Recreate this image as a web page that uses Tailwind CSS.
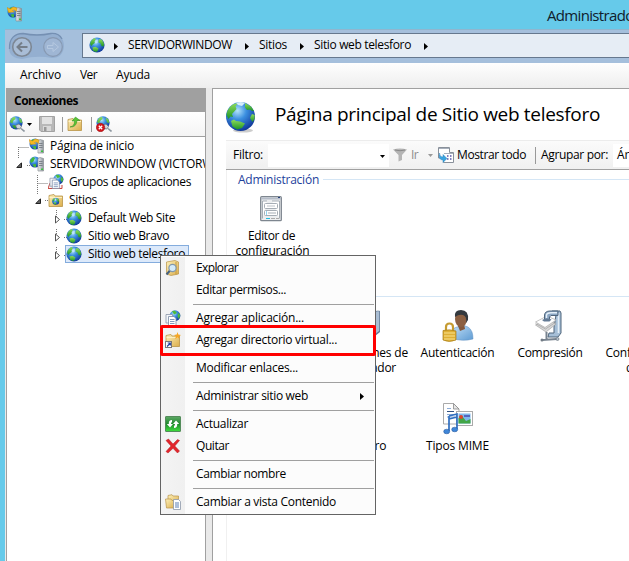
<!DOCTYPE html>
<html lang="es">
<head>
<meta charset="utf-8">
<title>Administrador de Internet Information Services</title>
<script src="https://cdn.jsdelivr.net/npm/@tailwindcss/browser@4"></script>
</head>
<body class="w-[629px] h-[561px] overflow-hidden bg-[#66caea] font-['Open_Sans','Noto_Sans',sans-serif] text-[12px] leading-[18px] text-black whitespace-nowrap relative">

<svg width="0" height="0" class="absolute">
  <defs>
    <radialGradient id="sea" cx=".4" cy=".3" r=".75"><stop offset="0" stop-color="#b4e4fb"/><stop offset=".4" stop-color="#3b8fe0"/><stop offset="1" stop-color="#0b2f93"/></radialGradient>
    <linearGradient id="land" x1="0" y1="0" x2="0" y2="1"><stop offset="0" stop-color="#8fdc5c"/><stop offset="1" stop-color="#1d9426"/></linearGradient>
    <linearGradient id="gold" x1="0" y1="0" x2="1" y2="1"><stop offset="0" stop-color="#fdf1bb"/><stop offset="1" stop-color="#dcae4c"/></linearGradient>
    <linearGradient id="steel" x1="0" y1="0" x2="1" y2="0"><stop offset="0" stop-color="#f0f2f4"/><stop offset="1" stop-color="#8d949c"/></linearGradient>
    <linearGradient id="greenbtn" x1="0" y1="0" x2="0" y2="1"><stop offset="0" stop-color="#5fa867"/><stop offset=".5" stop-color="#1f8a2c"/><stop offset="1" stop-color="#3ee03c"/></linearGradient>
    <linearGradient id="blue" x1="0" y1="0" x2="1" y2="1"><stop offset="0" stop-color="#c6e2f8"/><stop offset="1" stop-color="#5e9bd3"/></linearGradient>
    <symbol id="globe" viewBox="0 0 16 16">
      <circle cx="8" cy="8" r="7.600" fill="url(#sea)"/>
      <path d="M1 7C1.500 4 3.500 1.700 6 1L6.800 2.500 5.500 4.500 5.800 6 3.500 7.500 2.800 9Z" fill="url(#land)"/>
      <path d="M10.500 2L13 2.800 15 6.500 14.800 9.500 12.500 9 11.500 6.500 9.500 5.500 9.500 3.800Z" fill="url(#land)"/>
      <path d="M3.500 10.500L6.500 9.800 9.500 11.500 8.500 14.300 6.500 15 4 13.500Z" fill="url(#land)"/>
      <path d="M6.500 3L9 2.500 8.500 6 6.500 6.500Z" fill="#d8f2ff" opacity=".6"/>
    </symbol>
    <symbol id="bigglobe" viewBox="0 0 32 32">
      <ellipse cx="18" cy="29.500" rx="10" ry="2" fill="#999" opacity=".5"/>
      <circle cx="15.500" cy="15.500" r="14.500" fill="url(#sea)"/>
      <path d="M1.500 14C2 9 5 5 9 3L13 2 10.500 5.500 11.500 8 7 13 8 16 5.500 15.500 3.500 18Z" fill="url(#land)"/>
      <path d="M20 2L26 5.500 29 10 27 10 25 8.500 22 9 20 6.500Z" fill="url(#land)"/>
      <path d="M27 13L29.700 14 29.500 18 27.500 21 25 17Z" fill="url(#land)"/>
      <path d="M6 20L9 18.500 11 20 15 20.500 20 22.500 17 27 12 28.500 7.500 25.500Z" fill="url(#land)"/>
      <path d="M11 1.800Q16 0 20 2L17 5 13 4Z" fill="#effcff" opacity=".85"/>
    </symbol>
    <symbol id="server" viewBox="0 0 16 16">
      <circle cx="6" cy="6" r="5.500" fill="url(#sea)"/>
      <path d="M1 4.500L4 1 6 2 4.500 5.500 2 7Z M3.500 8.500L7 8 7 11 5 11Z" fill="#44b93a"/>
      <path d="M9 2.500L11 1.500 14.500 2.500V15H9Z" fill="url(#steel)" stroke="#8a8f94" stroke-width=".7"/>
      <path d="M10 5.500H13.500M10 7.500H13.500M10 9.500H13.500" stroke="#6d747b" stroke-width=".8"/>
      <rect x="12" y="12.500" width="2" height="1.500" fill="#39c43c"/>
    </symbol>
    <symbol id="home" viewBox="0 0 16 16">
      <use href="#server" width="16" height="16"/>
      <path d="M0 1.500L3.500 3Q6-.5 10 2L9.500 5.500Q7 3 5.500 4.500L7.500 6 1.500 6.500Z" fill="#f5b921" stroke="#c27c0a" stroke-width=".4"/>
    </symbol>
    <symbol id="folder" viewBox="0 0 16 16">
      <path d="M1 3.500L6 2.500 7 4H14.500V14.500H1Z" fill="url(#gold)" stroke="#b99447" stroke-width=".8"/>
      <path d="M1.500 5.500H14" stroke="#fff5d0" stroke-width=".8"/>
    </symbol>
    <symbol id="pages" viewBox="0 0 16 16">
      <circle cx="10" cy="5.700" r="5.400" fill="url(#sea)"/>
      <path d="M7 1L10 .7 12 3 9 4.500Z M13 3L15.300 5 14 9 12.500 6.500Z" fill="#4dbb3b"/>
      <path d="M1 4.500H7.500V13H1Z" fill="#f5f7fa" stroke="#8b97a8" stroke-width=".8"/>
      <path d="M3.500 6.500H9L11 8.500V15.500H3.500Z" fill="#fff" stroke="#7a8ba4" stroke-width=".8"/>
      <path d="M5 9.500H9.500M5 11.500H9.500M5 13.500H9.500" stroke="#7590b5" stroke-width=".9"/>
    </symbol>
    <symbol id="plug" viewBox="0 0 16 16">
      <circle cx="7" cy="6.800" r="6.600" fill="url(#sea)"/>
      <path d="M.8 6L3 2 6 .8 6.500 3 4 5 3.500 7.500Z M9.500 1.500L12.500 3.500 13.300 7 11 6.500Z M3 9.500L6 9 7.500 11 6 13Z" fill="url(#land)"/>
      <path d="M6.500 9.500L10 8 12.500 10.500 11 13 8 12.500Z" fill="#cfd5da" stroke="#697077" stroke-width=".7"/>
      <path d="M12 12.500L15.500 15.500" stroke="#8d979f" stroke-width="1.600"/>
    </symbol>
  </defs>
</svg>

<div class="flex flex-col h-full">
  <!-- Title bar -->
  <header class="h-[29px] flex items-center pl-[7px] shrink-0">
    <svg class="w-4 h-4 mt-[-1px] shrink-0"><use href="#home" width="16" height="16"/></svg>
    <span class="ml-[524px] text-[15px] leading-[20px] text-[#10202c]" data-font="15px" data-w="92">Administrador</span>
  </header>

  <div class="ml-[5px] flex-1 flex flex-col min-h-0">
    <!-- Address bar -->
    <div class="h-[34px] shrink-0 bg-[#a5bfdc] border-t border-[#8fb6cf] flex items-start pl-[3px]">
      <svg width="57" height="30" viewBox="0 0 57 30" class="mt-px">
        <path d="M1 17C1 7 7 2 15 2Q29 5 43 2C51 2 56 7 56 15Q55 27 44 27Q29 24 14 28Q1 27 1 17Z" fill="#94afd0"/>
        <path d="M1.500 18C1 7 7 2.500 15 2.500Q29 5.500 43 2.500Q51 2 54 8" fill="none" stroke="#7590b3" stroke-width="1.300"/>
        <circle cx="14" cy="16" r="9.300" fill="#a9bdd6" stroke="#7d8794" stroke-width="1.600"/>
        <path d="M19.500 16H9.500M14 11.500L9.500 16L14 20.500" fill="none" stroke="#757e89" stroke-width="2"/>
        <circle cx="45" cy="16" r="9.300" fill="#9fb6d4" stroke="#8799b2" stroke-width="1.200"/>
        <path d="M39.500 14.500H45V11.500L50.500 16L45 20.500V17.500H39.500Z" fill="none" stroke="#b5c8e0" stroke-width="1"/>
      </svg>
      <div class="ml-[17px] mt-[3px] flex-1 h-[25px] border border-r-0 border-[#66788e] bg-[#e6edf5] flex items-center pl-[6px]">
        <svg class="w-4 h-4 mt-[-1px] shrink-0"><use href="#globe" width="16" height="16"/></svg>
        <svg class="w-1 h-[7px] ml-[9px] mt-px shrink-0"><path d="M0 0L4 3.500L0 7Z"/></svg>
        <span class="ml-[10px] mt-[-1px]" data-w="104">SERVIDORWINDOW</span>
        <svg class="w-1 h-[7px] ml-[13px] mt-px shrink-0"><path d="M0 0L4 3.500L0 7Z"/></svg>
        <span class="ml-[10px] mt-[-1px]" data-w="28">Sitios</span>
        <svg class="w-1 h-[7px] ml-[13px] mt-px shrink-0"><path d="M0 0L4 3.500L0 7Z"/></svg>
        <span class="ml-[10px] mt-[-1px]" data-w="97">Sitio web telesforo</span>
        <svg class="w-1 h-[7px] ml-[13px] mt-px shrink-0"><path d="M0 0L4 3.500L0 7Z"/></svg>
      </div>
    </div>

    <!-- Menu bar -->
    <nav class="h-[25px] shrink-0 bg-linear-to-b from-[#fefefe] to-[#eeeeee] flex items-center pl-[15px] pb-px">
      <span data-w="41">Archivo</span>
      <span class="ml-[19px]" data-w="17">Ver</span>
      <span class="ml-[19px]" data-w="34">Ayuda</span>
    </nav>

    <div class="flex-1 min-h-0 flex bg-[#e9e9e9] pl-px">
      <!-- Connections pane -->
      <aside class="w-[200px] shrink-0 border-x border-[#a0a0a0] bg-white flex flex-col">
        <div class="h-6 shrink-0 bg-[#a0a0a0] pl-[7px] flex items-center font-bold pt-px"><span data-font="bold 12px" data-w="64">Conexiones</span></div>
        <div class="h-[25px] shrink-0 border-b border-[#a0a0a0] bg-linear-to-b from-white to-[#f4f4f4] flex items-center pl-[2px]">
          <svg class="w-4 h-4"><use href="#plug" width="16" height="16"/></svg>
          <svg class="w-[5px] h-[3px] ml-[2px]"><path d="M0 0H5L2.500 3Z"/></svg>
          <svg class="w-4 h-4 ml-[7px]" viewBox="0 0 16 16"><path d="M.5 .5H15.500V15.500H2L.5 14Z" fill="#b8b8b8" stroke="#a2a2a2"/><path d="M3 1H13V8H3Z" fill="#e2e2e2"/><path d="M4 10H12V15H4Z" fill="#d9d9d9"/><path d="M5 11H7.500V15H5Z" fill="#989898"/></svg>
          <i class="w-px h-[15px] bg-[#999] ml-[7px]"></i>
          <svg class="w-4 h-4 ml-[4px]" viewBox="0 0 16 16"><use href="#folder" width="16" height="16"/><path d="M3 11Q8 10 7.500 5H5L8.500 1L13 4.500H10Q9.500 11.500 3 11Z" fill="#59c436" stroke="#2f8b1f" stroke-width=".5"/></svg>
          <i class="w-px h-[15px] bg-[#999] ml-[8px]"></i>
          <svg class="w-4 h-4 ml-[4px]" viewBox="0 0 16 16"><use href="#plug" width="16" height="16"/><circle cx="4.500" cy="11.500" r="4.200" fill="#d4161b" stroke="#8e0d10" stroke-width=".5"/><path d="M2.800 9.800L6.200 13.200M6.200 9.800L2.800 13.200" stroke="#fff" stroke-width="1.300"/></svg>
        </div>
        <!-- Tree -->
        <div class="relative flex-1 overflow-hidden">
          <svg class="absolute left-0 top-0 w-[198px] h-[130px]" fill="none" stroke="#777" stroke-dasharray="1 1">
            <path d="M11.500 10V22M11.500 10.500H22M20 28.500H24M30.500 38V58M30.500 46.500H41M38 63.500H42M49.500 73V80M49.500 92V98M49.500 110V116M57 82.500H60M57 100.500H60M57 118.500H60"/>
          </svg>
          <div class="relative flex flex-col">
            <div class="h-[18px] flex items-center pl-[22px]"><svg class="w-4 h-4 shrink-0"><use href="#home" width="16" height="16"/></svg><span class="ml-[5px]" data-w="84">Página de inicio</span></div>
            <div class="h-[18px] flex items-center pl-[9px]"><svg class="w-[6px] h-[6px] mt-[2px] shrink-0"><path d="M5.500 .8V5.500H.8Z" fill="#666" stroke="#222"/></svg><svg class="w-4 h-4 ml-[7px] shrink-0"><use href="#server" width="16" height="16"/></svg><span class="ml-[5px]" data-w="163">SERVIDORWINDOW (VICTORW</span></div>
            <div class="h-[18px] flex items-center pl-[41px]"><svg class="w-4 h-4 shrink-0" viewBox="0 0 16 16"><path d="M2 9L0 14.500H14V11" fill="#fbeeee" stroke="#c94a42"/><use href="#pages" x="1" width="15" height="15"/></svg><span class="ml-[5px]" data-w="122">Grupos de aplicaciones</span></div>
            <div class="h-[18px] flex items-center pl-[28px]"><svg class="w-[6px] h-[6px] mt-[2px] shrink-0"><path d="M5.500 .8V5.500H.8Z" fill="#666" stroke="#222"/></svg><svg class="w-4 h-4 ml-[7px] shrink-0" viewBox="0 0 16 16"><use href="#folder" width="16" height="16"/><use href="#globe" x="4" y="5.500" width="7.500" height="7.500"/></svg><span class="ml-[5px]" data-w="28">Sitios</span></div>
            <div class="h-[18px] flex items-center pl-[48px]"><svg class="w-[5px] h-[9px] mt-[2px] shrink-0"><path d="M.5 1L4.500 4.500L.5 8Z" fill="#fff" stroke="#555"/></svg><svg class="w-4 h-4 ml-[6px] shrink-0"><use href="#globe" width="16" height="16"/></svg><span class="ml-[6px]" data-w="87">Default Web Site</span></div>
            <div class="h-[18px] flex items-center pl-[48px]"><svg class="w-[5px] h-[9px] mt-[2px] shrink-0"><path d="M.5 1L4.500 4.500L.5 8Z" fill="#fff" stroke="#555"/></svg><svg class="w-4 h-4 ml-[6px] shrink-0"><use href="#globe" width="16" height="16"/></svg><span class="ml-[6px]" data-w="81">Sitio web Bravo</span></div>
            <div class="h-[18px] flex items-center pl-[48px]"><svg class="w-[5px] h-[9px] mt-[2px] shrink-0"><path d="M.5 1L4.500 4.500L.5 8Z" fill="#fff" stroke="#555"/></svg><div class="ml-[5px] w-[124px] h-[18px] bg-[#dce9fa] border border-[#84acdd] flex items-center"><svg class="w-4 h-4 shrink-0"><use href="#globe" width="16" height="16"/></svg><span class="ml-[6px]" data-w="97">Sitio web telesforo</span></div></div>
          </div>
        </div>
      </aside>

      <!-- Main pane -->
      <main class="ml-[6px] flex-1 min-w-0 bg-white border-l border-t border-[#a0a0a0] pl-[13px] flex flex-col">
        <div class="h-[51px] shrink-0 flex items-center">
          <svg class="w-8 h-8 ml-[-1px] mt-[5px] shrink-0"><use href="#bigglobe" width="32" height="32"/></svg>
          <h1 class="ml-[18px] text-[19px] leading-[26px] mt-[-1px]" data-font="19px" data-w="325">Página principal de Sitio web telesforo</h1>
        </div>
        <div class="h-[30px] shrink-0 border-t border-t-[#ececec] border-b border-b-[#a0a0a0] bg-linear-to-b from-[#fbfbfb] to-[#f0f0f0] flex items-center pl-[7px]">
          <span data-w="30">Filtro:</span>
          <div class="ml-[5px] w-[121px] h-[23px] bg-white flex items-center justify-end pr-[4px] shrink-0"><svg class="w-[5px] h-[3px] mt-[2px]"><path d="M0 0H5L2.500 3Z"/></svg></div>
          <svg class="w-[14px] h-[14px] ml-[4px] shrink-0" viewBox="0 0 14 14"><path d="M0 1.500Q7-.5 14 1.500L9 7V12L5.500 13.500V7Z" fill="#b5b5b5"/><path d="M2 2Q7 3.500 12 2" stroke="#888" fill="none"/></svg>
          <span class="ml-[4px] text-[#8d8d8d]" data-w="7">Ir</span>
          <svg class="w-[5px] h-[3px] ml-[10px] mt-px shrink-0"><path d="M0 0H5L2.500 3Z" fill="#999"/></svg>
          <svg class="w-4 h-4 ml-[5px] shrink-0" viewBox="0 0 16 16"><path d="M.5 .5H11.500V5.500H15.500V15.500H5.500V11H.5Z" fill="#fff" stroke="#89909a"/><path d="M1 1.500H11M6 6.500H15" stroke="#a7afbb"/><path d="M9 9H10.500M12 9H13.500M9 12H10.500M12 12H13.500" stroke="#5a55a8" stroke-width="1.600"/><path d="M1.500 6Q1.500 10 5 10V7.500L9 11.500L5 15.500V13Q0 13 1.500 6Z" fill="#3ba4e0" stroke="#1b73ad" stroke-width=".4"/></svg>
          <span class="ml-[3px]" data-w="69">Mostrar todo</span>
          <i class="w-px h-[17px] bg-[#999] ml-[9px] shrink-0"></i>
          <span class="ml-[5px]" data-w="67">Agrupar por:</span>
          <div class="ml-[5px] flex-1 h-[23px] bg-white pl-[4px] flex items-center overflow-hidden"><span>Área</span></div>
        </div>
        <!-- Feature list -->
        <div class="flex-1 min-h-0 border-l border-[#f0f0f0] overflow-hidden">
          <div class="h-[19px] flex items-center pl-[11px] text-[#1e3f9c]"><span data-w="81">Administración</span><i class="ml-1 flex-1 h-px bg-[#d5e6f5]"></i></div>
          <div class="h-[107px] pt-[6px] grid grid-cols-[91px] text-center leading-[15px]">
            <div class="flex flex-col items-center">
              <svg class="w-[22px] h-[26px] mt-px ml-[-3px]" viewBox="0 0 22 26"><rect x=".7" y=".7" width="20.600" height="24" rx="1" fill="#eceef0" stroke="#7e868f" stroke-width="1.300"/><path d="M1 2.500H21" stroke="#b5bcc8" stroke-width="2"/><path d="M18 1.500H20" stroke="#24407a"/><path d="M2.500 22.500V5H7M12 5H19.500V22.500" fill="#fff" stroke="#a5adb5"/><rect x="4.500" y="7.500" width="13" height="5" rx="1" fill="#fff" stroke="#a5adb5"/><path d="M7 10H15" stroke="#bcc2c8"/><rect x="4.500" y="14.500" width="13" height="5" rx="1" fill="#fff" stroke="#a5adb5"/><path d="M6 16H7M6 18H7" stroke="#28a8df"/><path d="M8 17H16" stroke="#a5adb5"/><path d="M6 22.500H10" stroke="#20bce0"/><path d="M11 22.500H15M16 22.500H19" stroke="#aaa"/></svg>
              <span class="mt-[6px] ml-[-2px]" data-w="47">Editor de</span><span data-w="74">configuración</span>
            </div>
          </div>
          <div class="h-px ml-[40px] bg-[#d5e6f5]"></div>
          <div class="pt-[13px] ml-[-1px] grid grid-cols-[92px_93px_93px_92px_94px] auto-rows-[93px] text-center leading-[15px]">
            <div></div>
            <div class="flex flex-col items-center"><svg class="w-8 h-8" viewBox="0 0 32 32"><path d="M-14 5L20 1 31 1V22L26 26H-14Z" fill="#5b7798"/><path d="M24 3L28 1H30.500V21L26.500 24Z" fill="#a9bdd3" stroke="#6a7f98" stroke-width=".6"/></svg><span class="mt-[3px]" data-w="87">Asignaciones de</span><span data-w="63">controlador</span></div>
            <div class="flex flex-col items-center">
              <svg class="w-8 h-8" viewBox="0 0 32 32"><path d="M9 28Q9 18 15 17L21 15 26 17Q31 20 31 29Q20 32 9 28Z" fill="url(#blue)" stroke="#5c8fc0" stroke-width=".5"/><path d="M16 16L22 14 23 19 18 21Z" fill="#83583c"/><ellipse cx="19" cy="9" rx="6" ry="8" fill="#8c6042"/><path d="M13 7Q12 0 19 0Q27 0 26 10L24 13Q25 6 21 5Q17 4 13 7Z" fill="#34393e"/><path d="M4 22V17Q4 13.500 7.500 13.500Q11 13.500 11 17V22" fill="none" stroke="#c59b31" stroke-width="2.200"/><path d="M1 20.500Q8 19 14 21V30Q7 33 1 30Z" fill="#dfb035" stroke="#a67b17" stroke-width=".7"/><path d="M2 23H13M2 26H13M2 29H13" stroke="#fff0a6" stroke-width=".8"/></svg>
              <span class="mt-[3px]" data-w="74">Autenticación</span>
            </div>
            <div class="flex flex-col items-center">
              <svg class="w-8 h-8 ml-[-1px]" viewBox="0 0 32 32"><path d="M18 1H26L27 3V23L24 27H14L15 23H20V17L22 5Z" fill="#a6bfd7" stroke="#50667c"/><path d="M24.500 3V23" stroke="#e4eff8" stroke-width="1.600"/><path d="M1.500 15L13 8 22 14 12 22Z" fill="#d8d8d8" stroke="#999" stroke-width=".6"/><path d="M1.500 12L13 6 22 10 11 17.500Z" fill="#fff" stroke="#aaa" stroke-width=".7"/><path d="M1.500 13.500L11.500 19 22 12" fill="none" stroke="#999" stroke-width=".6"/><path d="M10.500 10V5Q11 1 16 1H24V5.500H17L15.500 7V10Z" fill="#8ba6c3" stroke="#50667c"/><path d="M12.500 8V5Q13 2.800 17 2.800H23" fill="none" stroke="#e4eff8" stroke-width="1.400"/><path d="M8 10Q13 7.500 17.500 9.500L15.500 11.500H10Z" fill="#647b95"/><path d="M12.500 22V30M8 30L23 29" stroke="#78838f" stroke-width="2"/><circle cx="8" cy="30" r="1.500" fill="#737c86"/><circle cx="23.500" cy="29" r="1.500" fill="#b6c0ca" stroke="#606b76" stroke-width=".6"/></svg>
              <span class="mt-[3px]" data-w="65">Compresión</span>
            </div>
            <div class="flex flex-col items-center"><div class="h-8"></div><span class="mt-[3px]" data-w="75">Configuración</span><span data-w="34">de SSL</span></div>
            <div></div>
            <div class="flex flex-col items-center"><div class="h-8"></div><span class="mt-[3px]" data-w="43">Registro</span></div>
            <div class="flex flex-col items-center">
              <svg class="w-8 h-8" viewBox="0 0 32 32"><path d="M1.500 .5H11.500L17 6V21H1.500Z" fill="#fff" stroke="#aaa"/><path d="M11.500 .5V6H17Z" fill="#e6e6e6" stroke="#888" stroke-width=".8"/><path d="M5 5.500H9M5 11.500H13M5 14H13" stroke="#8eadd8"/><path d="M5 8.500H12" stroke="#315180"/><rect x="14.500" y="8.500" width="16" height="14" fill="#fff" stroke="#aaa"/><rect x="16.500" y="10.500" width="12" height="10" fill="#7fb8ed"/><path d="M16.500 20.500V15L20 13 24 18 28.500 16V20.500Z" fill="#42a646"/><circle cx="19" cy="14" r="2" fill="#dc452a"/><path d="M22 12H28V14H22Z" fill="#5565bd"/><path d="M7 13L15 11V26M7 13V28M7 16L15 14" fill="none" stroke="#306fc0" stroke-width="1.700"/><ellipse cx="4.700" cy="28.500" rx="3" ry="2.300" fill="#3f86d8" stroke="#245295" stroke-width=".5"/><ellipse cx="12.700" cy="26.500" rx="3" ry="2.300" fill="#3f86d8" stroke="#245295" stroke-width=".5"/></svg>
              <span class="mt-[3px]" data-w="63">Tipos MIME</span>
            </div>
          </div>
        </div>
      </main>
    </div>
  </div>
</div>

<!-- Context menu -->
<div class="absolute left-[160px] top-[255px] w-[216px] h-[260px] border border-[#646464] bg-[#fcfcfc] pt-px">
  <div class="h-full bg-linear-to-r from-[#f4f4f4] to-[#f0f0f0] bg-[length:24px_100%] bg-no-repeat pb-px">
    <div class="h-[22px] flex items-center pl-[4px]"><svg class="w-4 h-4" viewBox="0 0 16 16"><path d="M1.500 2L10 .5 13.500 2V14L6 15.500 1.500 14Z" fill="url(#gold)" stroke="#b99447" stroke-width=".7"/><path d="M11 2V14.500" stroke="#c39b43"/><path d="M5 10.500L1.500 14.500" stroke="#46617f" stroke-width="2"/><circle cx="7.500" cy="8" r="3.600" fill="#d4ebfa" stroke="#8097ad" stroke-width="1.200"/></svg><span class="ml-[15px]" data-w="42">Explorar</span></div>
    <div class="h-[22px] flex items-center pl-[35px]"><span data-w="90">Editar permisos...</span></div>
    <div class="h-[6px] flex items-center pl-8 pr-px"><i class="flex-1 h-px bg-[#a0a0a0]"></i></div>
    <div class="h-[22px] flex items-center pl-[4px]"><svg class="w-4 h-4"><use href="#pages" width="16" height="16"/></svg><span class="ml-[15px]" data-w="108">Agregar aplicación...</span></div>
    <div class="h-[22px] flex items-center pl-[4px]"><svg class="w-4 h-4" viewBox="0 0 16 16"><use href="#folder" width="16" height="16"/><path d="M12.500 0L13.300 2.500 16 3 13.800 4.500 14.500 7 12.500 5.500 10 7 11 4.500 9 3 11.700 2.500Z" fill="#f6a623"/><rect x=".5" y="9.500" width="6" height="6" fill="#fff" stroke="#777"/><path d="M2 14.500L5 11.500M2.700 11H5.300V13.500" fill="none" stroke="#223f9c" stroke-width="1.200"/></svg><span class="ml-[15px]" data-w="141">Agregar directorio virtual...</span></div>
    <div class="h-[6px] flex items-center pl-8 pr-px"><i class="flex-1 h-px bg-[#a0a0a0]"></i></div>
    <div class="h-[22px] flex items-center pl-[35px]"><span data-w="102">Modificar enlaces...</span></div>
    <div class="h-[6px] flex items-center pl-8 pr-px"><i class="flex-1 h-px bg-[#a0a0a0]"></i></div>
    <div class="h-[22px] flex items-center justify-between pl-[35px] pr-[11px]"><span data-w="112">Administrar sitio web</span><svg class="w-1 h-[7px] mt-px"><path d="M0 0L4 3.500L0 7Z"/></svg></div>
    <div class="h-[6px] flex items-center pl-8 pr-px"><i class="flex-1 h-px bg-[#a0a0a0]"></i></div>
    <div class="h-[22px] flex items-center pl-[4px]"><svg class="w-4 h-4" viewBox="0 0 16 16"><rect x=".5" y=".5" width="15" height="15" rx=".5" fill="url(#greenbtn)" stroke="#548c5b"/><path d="M7 4Q3.500 4 3.800 8H1.800L5 11.500 8 8H6Q6 6.500 7 6Z M9 12Q12.500 12 12.200 8H14.200L11 4.500 8 8H10Q10 9.500 9 10Z" fill="#fff"/></svg><span class="ml-[15px]" data-w="52">Actualizar</span></div>
    <div class="h-[22px] flex items-center pl-[4px]"><svg class="w-4 h-4" viewBox="0 0 16 16"><path d="M1 2.500L3.500 1 8 6 12.500 1.500 14.500 2.500 9.800 8 14.500 13 12.500 15 8 10.300 3 15 1 13.500 6 8Z" fill="#e2252b" stroke="#b51a20" stroke-width=".5"/></svg><span class="ml-[15px]" data-w="33">Quitar</span></div>
    <div class="h-[6px] flex items-center pl-8 pr-px"><i class="flex-1 h-px bg-[#a0a0a0]"></i></div>
    <div class="h-[22px] flex items-center pl-[35px]"><span data-w="90">Cambiar nombre</span></div>
    <div class="h-[6px] flex items-center pl-8 pr-px"><i class="flex-1 h-px bg-[#a0a0a0]"></i></div>
    <div class="h-[22px] flex items-center pl-[4px]"><svg class="w-4 h-4" viewBox="0 0 16 16"><path d="M3 1.500L7 .7 8 2H13.500V11H3Z" fill="url(#gold)" stroke="#b99447" stroke-width=".7"/><path d="M.5 5H6L7 6.500H10V14H1.500Z" fill="url(#gold)" stroke="#b99447" stroke-width=".7"/><path d="M8.500 5.500H13.500L15.500 7.500V15.500H8.500Z" fill="#fff" stroke="#8b97a8" stroke-width=".8"/><path d="M10 9H14M10 11H14M10 13H14" stroke="#5a7eb5"/></svg><span class="ml-[15px]" data-w="140">Cambiar a vista Contenido</span></div>
  </div>
</div>
<!-- Highlight around the virtual directory command -->
<div class="absolute left-[160px] top-[325px] w-[216px] h-[31px] border-3 border-[#f00] rounded-[2px]"></div>

<script>
  // Track each label so that it fills its designated width.
  var pen = document.createElement('canvas').getContext('2d');
  document.querySelectorAll('[data-w]').forEach(function (el) {
    pen.font = (el.dataset.font || '12px') + ' "Open Sans", "Noto Sans", sans-serif';
    var text = el.textContent;
    el.style.flexShrink = 0;
    el.style.letterSpacing = (el.dataset.w - pen.measureText(text).width) / text.length + 'px';
  });
</script>
</body>
</html>
